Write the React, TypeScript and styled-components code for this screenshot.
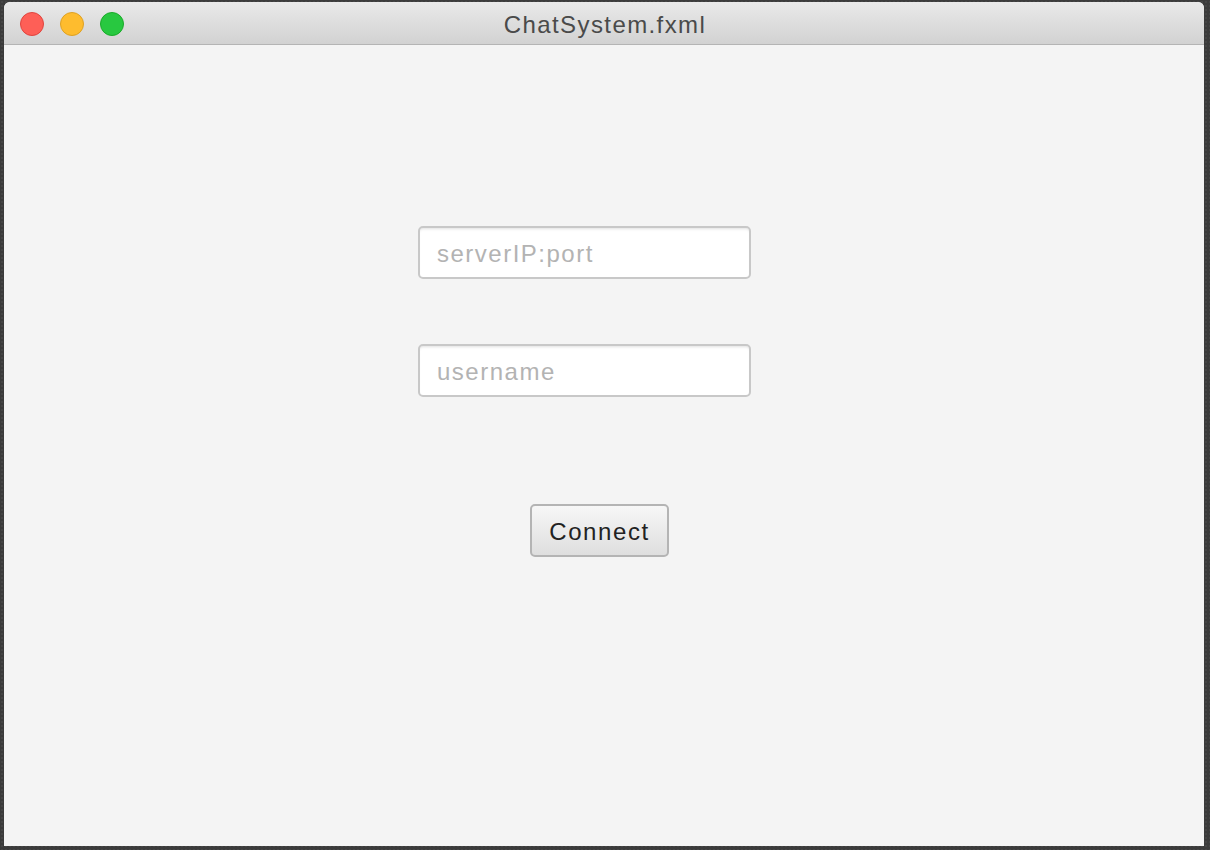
import React from 'react';
import styled, { createGlobalStyle } from 'styled-components';

const GlobalStyle = createGlobalStyle`
    html, body {
        margin: 0;
        padding: 0;
        width: 1210px;
        height: 850px;
        overflow: hidden;
        background-color: #3b3b3b;
        font-family: "Liberation Sans", Arial, sans-serif;
    }
`;

// ============================== Window ==============================

const Desktop = styled.div`
    width: 1210px;
    height: 850px;
    box-sizing: border-box;
    padding: 2px 6px 4px 4px;
    background-color: #3b3b3b;
    background-image: radial-gradient(#454545 1px, transparent 1px);
    background-size: 4px 4px;
`;

const Window = styled.div`
    width: 100%;
    height: 100%;
    display: flex;
    flex-direction: column;
    border-radius: 6px 6px 0 0;
    overflow: hidden;
    background-color: #f4f4f4;
`;

const TitleBar = styled.div`
    position: relative;
    height: 42px;
    flex-shrink: 0;
    display: flex;
    align-items: center;
    justify-content: center;
    background: linear-gradient(#e9e9e9, #d2d2d2);
    border-bottom: 1px solid #b4b4b4;
`;

const Lights = styled.div`
    position: absolute;
    left: 16px;
    top: 10px;
    display: flex;
    gap: 16px;
`;

const Light = styled.span<{ $fill: string; $edge: string }>`
    width: 24px;
    height: 24px;
    border-radius: 50%;
    box-sizing: border-box;
    background-color: ${props => props.$fill};
    border: 1px solid ${props => props.$edge};
`;

const Title = styled.div`
    font-size: 24px;
    letter-spacing: 1.4px;
    color: #4a4a4a;
    margin-left: 2px;
    margin-top: 4px;
`;

// ============================== Body ==============================

const Body = styled.div`
    flex: 1;
    display: flex;
    flex-direction: column;
    align-items: flex-start;
    padding: 181px 0 0 414px;
`;

const Field = styled.input`
    width: 333px;
    height: 53px;
    box-sizing: border-box;
    padding: 2px 17px 0;
    margin-bottom: 12px;
    border: 2px solid #c8c8c8;
    border-radius: 5px;
    background-color: #ffffff;
    box-shadow: inset 0 3px 3px -2px rgba(0, 0, 0, 0.12);
    font-family: "Liberation Sans", Arial, sans-serif;
    font-size: 24px;
    letter-spacing: 1.5px;
    color: #333;
    outline: none;

    & + & {
        margin-top: 53px;
    }

    &::placeholder {
        color: #b3b3b3;
    }
`;

const ConnectButton = styled.button`
    margin: 95px 0 0 112px;
    width: 139px;
    height: 53px;
    box-sizing: border-box;
    border: 2px solid #b4b4b4;
    border-radius: 5px;
    background: linear-gradient(#f7f7f7, #dedede);
    font-family: "Liberation Sans", Arial, sans-serif;
    font-size: 24px;
    letter-spacing: 1.6px;
    color: #222;
    padding: 2px 0 0;
`;

export default function App(): JSX.Element {
    return (
        <>
            <GlobalStyle />
            <Desktop>
                <Window>
                    <TitleBar>
                        <Lights>
                            <Light $fill="#fe5f57" $edge="#e0443e" />
                            <Light $fill="#febc2e" $edge="#dea123" />
                            <Light $fill="#28c840" $edge="#1aab29" />
                        </Lights>
                        <Title>ChatSystem.fxml</Title>
                    </TitleBar>
                    <Body>
                        <Field placeholder="serverIP:port" />
                        <Field placeholder="username" />
                        <ConnectButton>Connect</ConnectButton>
                    </Body>
                </Window>
            </Desktop>
        </>
    );
}
